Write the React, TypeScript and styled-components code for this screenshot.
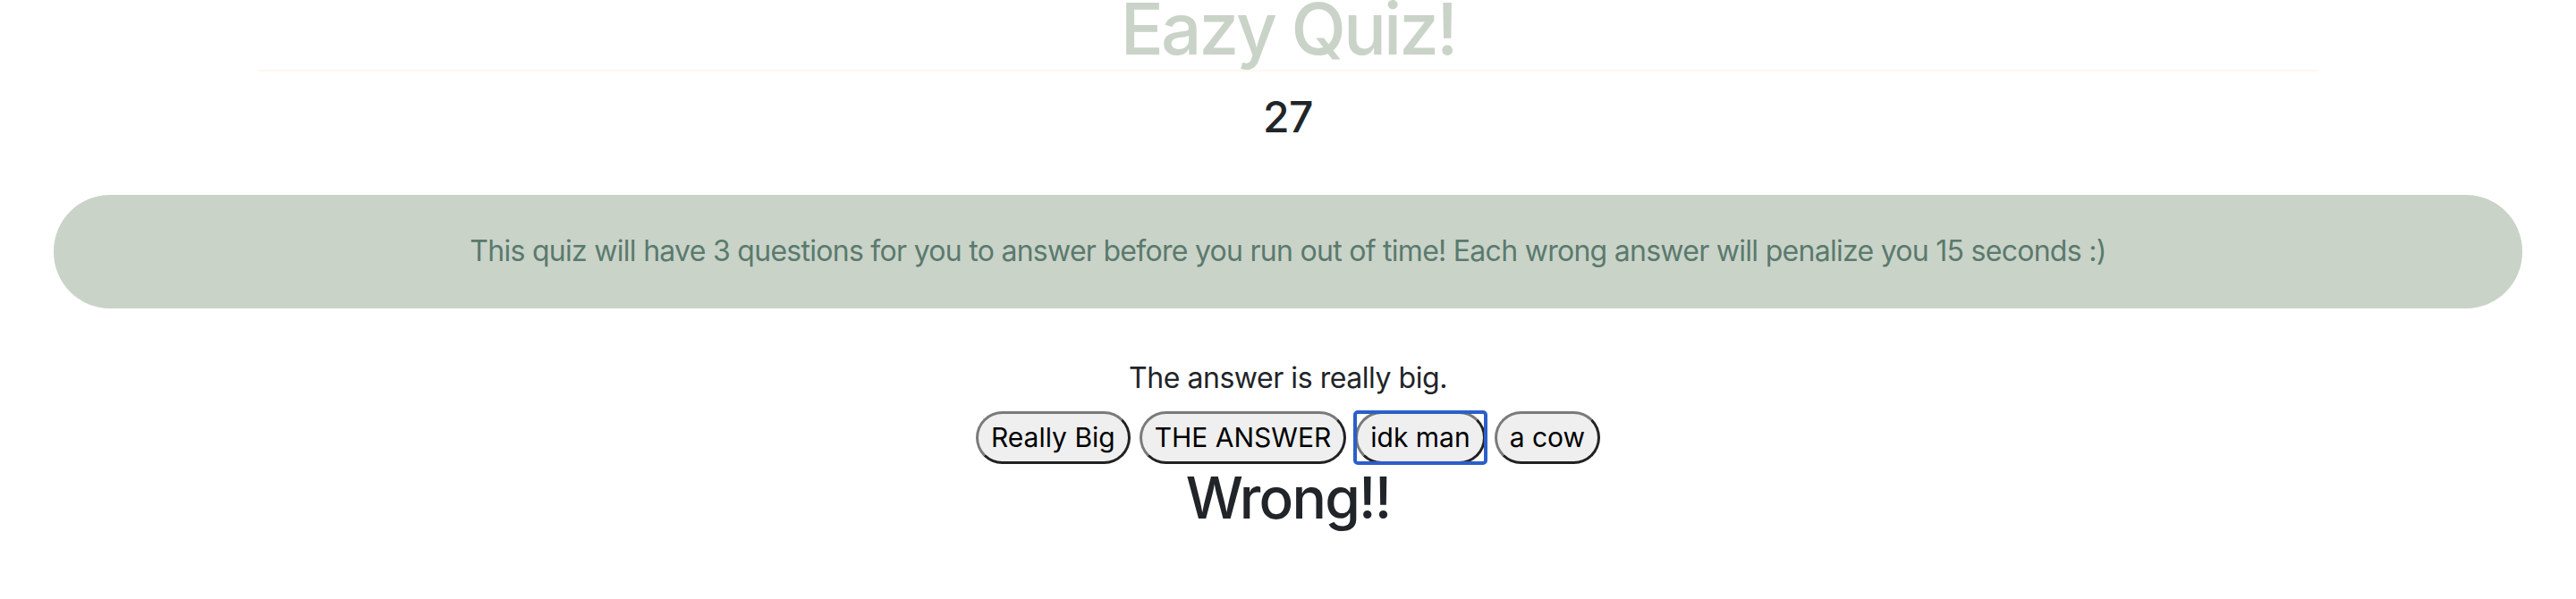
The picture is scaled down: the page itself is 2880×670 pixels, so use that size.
import React from "react";
import styled, { createGlobalStyle } from "styled-components";

const GlobalStyle = createGlobalStyle`
  html, body {
    margin: 0;
    padding: 0;
    background: #ffffff;
  }
  body {
    font-family: Inter, "Noto Sans", "Liberation Sans", sans-serif;
    color: #212529;
    overflow: hidden;
  }
`;

const Page = styled.main`
  display: flex;
  flex-direction: column;
  align-items: center;
  text-align: center;
  width: 100%;
`;

const Title = styled.h1`
  margin: -8px 0 0;
  font-size: 80px;
  line-height: 80px;
  font-weight: 500;
  letter-spacing: -3px;
  color: #cad3c8;
`;

const Rule = styled.hr`
  width: 80%;
  margin: 6px 0 0;
  border: 0;
  border-top: 2px solid #fdf8ee;
`;

const Timer = styled.h4`
  margin: 22px 0 0;
  font-size: 48px;
  line-height: 1.2;
  font-weight: 500;
  letter-spacing: -0.5px;
  color: #212529;
`;

const Banner = styled.section`
  box-sizing: border-box;
  align-self: stretch;
  margin: 58px 60px 0;
  height: 127px;
  border-radius: 63px;
  background: #cad3c8;
  display: flex;
  align-items: center;
  justify-content: center;
`;

const BannerText = styled.p`
  margin: 0;
  font-size: 32px;
  line-height: 48px;
  letter-spacing: -0.72px;
  color: #5a7a6e;
`;

const Question = styled.p`
  margin: 54px 0 0;
  font-size: 32px;
  line-height: 48px;
  letter-spacing: -0.45px;
  color: #212529;
`;

const Answers = styled.div`
  display: flex;
  justify-content: center;
  gap: 10px;
  margin-top: 13px;
`;

const AnswerButton = styled.button<{ $focused?: boolean }>`
  position: relative;
  box-sizing: border-box;
  height: 59px;
  padding: 0 14px;
  font-family: Inter, "Noto Sans", "Liberation Sans", sans-serif;
  font-size: 30px;
  line-height: 48px;
  color: #000000;
  background: #efefef;
  border-width: 3px;
  border-style: solid;
  border-color: #7a7a7a #222222 #222222 #7a7a7a;
  border-radius: 30px;
  cursor: pointer;

  &::after {
    content: "";
    display: ${(p) => (p.$focused ? "block" : "none")};
    position: absolute;
    inset: -4px -5px;
    border: 4px solid #2b5fc9;
    border-radius: 5px;
    pointer-events: none;
  }
`;

const Verdict = styled.h2`
  margin: 0;
  font-size: 64px;
  line-height: 1.2;
  font-weight: 500;
  letter-spacing: -1.8px;
  color: #212529;
`;

const answers = ["Really Big", "THE ANSWER", "idk man", "a cow"];

export default function App() {
  return (
    <>
      <GlobalStyle />
      <Page>
        <Title>Eazy Quiz!</Title>
        <Rule />
        <Timer>27</Timer>
        <Banner>
          <BannerText>
            This quiz will have 3 questions for you to answer before you run out of time! Each wrong answer will penalize you 15 seconds :)
          </BannerText>
        </Banner>
        <Question>The answer is really big.</Question>
        <Answers>
          {answers.map((a) => (
            <AnswerButton key={a} $focused={a === "idk man"}>
              {a}
            </AnswerButton>
          ))}
        </Answers>
        <Verdict>Wrong!!</Verdict>
      </Page>
    </>
  );
}
